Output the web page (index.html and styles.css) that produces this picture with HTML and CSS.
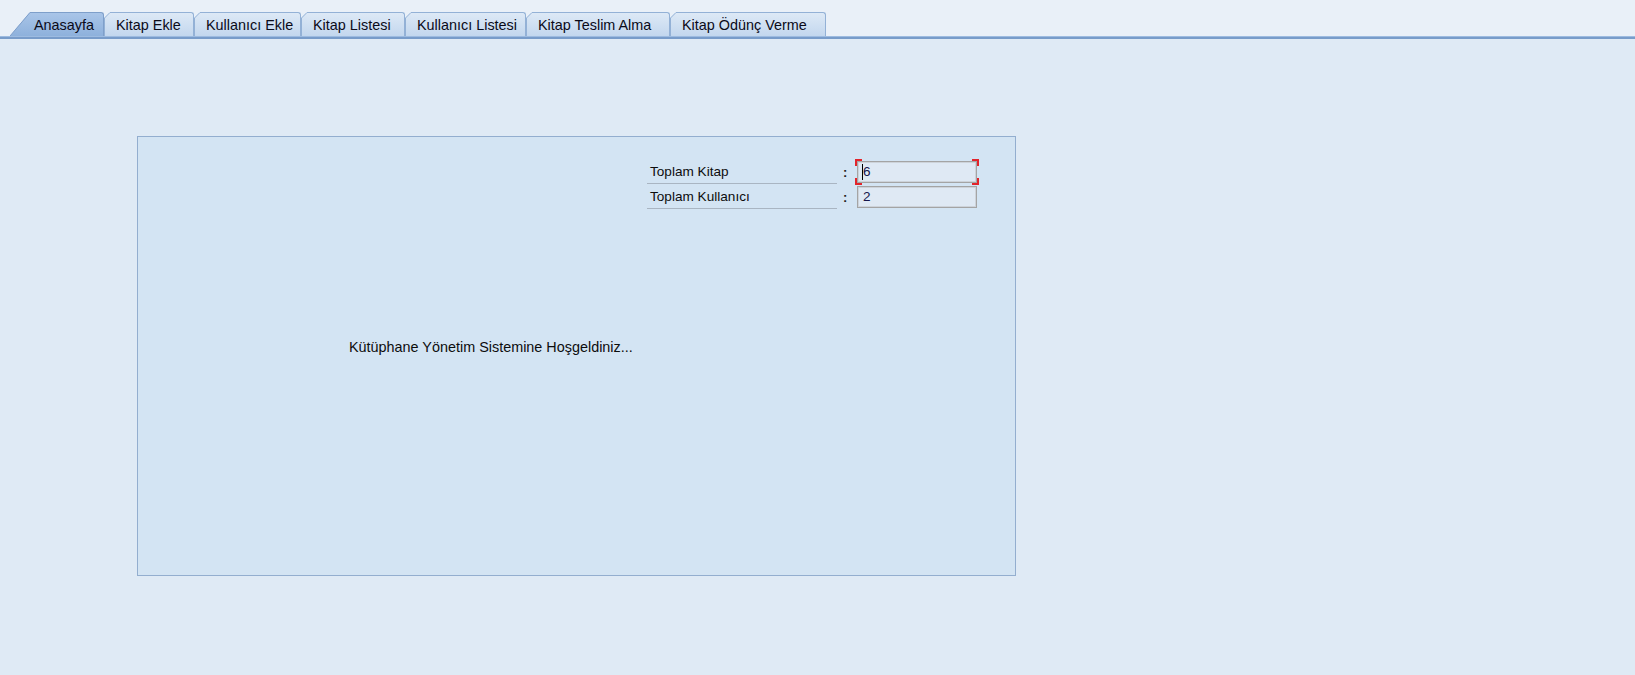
FILE: index.html
```html
<!DOCTYPE html>
<html lang="tr">
<head>
<meta charset="utf-8">
<title>Kütüphane Yönetim Sistemi</title>
<link rel="stylesheet" href="styles.css">
</head>
<body>
<svg class="defs" width="0" height="0" aria-hidden="true">
  <defs>
    <linearGradient id="gSel" x1="0" y1="0" x2="0" y2="1">
      <stop offset="0" stop-color="#a9c5e8"/>
      <stop offset="1" stop-color="#8eb1dc"/>
    </linearGradient>
    <linearGradient id="gTab" x1="0" y1="0" x2="0" y2="1">
      <stop offset="0" stop-color="#dde9f6"/>
      <stop offset="1" stop-color="#c3d7ee"/>
    </linearGradient>
  </defs>
</svg>
<div class="app">
  <div class="tabstrip">
    <div class="tab selected w-ana">
      <svg class="slant-long" width="20" height="24" viewBox="0 0 20 24"><polygon points="0,24 20,0 20,24" fill="url(#gSel)"/><polyline points="0,24 20,0.5" fill="none" stroke="#7e9fca" stroke-width="1"/></svg>
      <div class="tab-body">Anasayfa</div>
    </div>
    <div class="tab w-ekle">
      <svg class="slant" width="6" height="24" viewBox="0 0 6 24"><polygon points="0,24 0,6 6,0 6,24" fill="url(#gTab)"/><polyline points="0.5,24 0.5,6 6,0.5" fill="none" stroke="#93b1d6" stroke-width="1"/></svg>
      <div class="tab-body">Kitap Ekle</div>
    </div>
    <div class="tab w-kekle">
      <svg class="slant" width="6" height="24" viewBox="0 0 6 24"><polygon points="0,24 0,6 6,0 6,24" fill="url(#gTab)"/><polyline points="0.5,24 0.5,6 6,0.5" fill="none" stroke="#93b1d6" stroke-width="1"/></svg>
      <div class="tab-body">Kullanıcı Ekle</div>
    </div>
    <div class="tab w-klist">
      <svg class="slant" width="6" height="24" viewBox="0 0 6 24"><polygon points="0,24 0,6 6,0 6,24" fill="url(#gTab)"/><polyline points="0.5,24 0.5,6 6,0.5" fill="none" stroke="#93b1d6" stroke-width="1"/></svg>
      <div class="tab-body">Kitap Listesi</div>
    </div>
    <div class="tab w-ulist">
      <svg class="slant" width="6" height="24" viewBox="0 0 6 24"><polygon points="0,24 0,6 6,0 6,24" fill="url(#gTab)"/><polyline points="0.5,24 0.5,6 6,0.5" fill="none" stroke="#93b1d6" stroke-width="1"/></svg>
      <div class="tab-body">Kullanıcı Listesi</div>
    </div>
    <div class="tab w-teslim">
      <svg class="slant" width="6" height="24" viewBox="0 0 6 24"><polygon points="0,24 0,6 6,0 6,24" fill="url(#gTab)"/><polyline points="0.5,24 0.5,6 6,0.5" fill="none" stroke="#93b1d6" stroke-width="1"/></svg>
      <div class="tab-body">Kitap Teslim Alma</div>
    </div>
    <div class="tab w-odunc">
      <svg class="slant" width="6" height="24" viewBox="0 0 6 24"><polygon points="0,24 0,6 6,0 6,24" fill="url(#gTab)"/><polyline points="0.5,24 0.5,6 6,0.5" fill="none" stroke="#93b1d6" stroke-width="1"/></svg>
      <div class="tab-body">Kitap Ödünç Verme</div>
    </div>
  </div>
  <div class="tabline"></div>
  <div class="content">
    <div class="panel">
      <div class="stats">
        <div class="row">
          <div class="label">Toplam Kitap</div>
          <div class="colon">:</div>
          <div class="field focused">
            <span class="caret"></span>6
            <span class="corner tl"></span><span class="corner tr"></span><span class="corner bl"></span><span class="corner br"></span>
          </div>
        </div>
        <div class="row">
          <div class="label">Toplam Kullanıcı</div>
          <div class="colon">:</div>
          <div class="field">2</div>
        </div>
      </div>
      <div class="welcome">Kütüphane Yönetim Sistemine Hoşgeldiniz...</div>
    </div>
  </div>
</div>
</body>
</html>
```

FILE: styles.css
```css
* { box-sizing: border-box; }

html, body {
  margin: 0;
  padding: 0;
  height: 100%;
  overflow: hidden;
}

body {
  background: #dfeaf5;
  font-family: "Liberation Sans", Arial, sans-serif;
  font-size: 13px;
  color: #111;
}

.defs {
  position: absolute;
  width: 0;
  height: 0;
  overflow: hidden;
}

.app {
  display: flex;
  flex-direction: column;
  height: 100%;
}

.tabstrip {
  height: 36px;
  background: #e9f0f8;
  display: flex;
  align-items: flex-end;
  padding-left: 10px;
}

.tab {
  display: flex;
  height: 24px;
}

.tab svg {
  display: block;
  flex: none;
}

.tab-body {
  flex: 1;
  height: 24px;
  line-height: 24px;
  padding-left: 6px;
  white-space: nowrap;
  font-size: 14.4px;
  color: #0a0a18;
  border-top: 1px solid #93b1d6;
  border-right: 1px solid #93b1d6;
  border-top-right-radius: 3px;
  background: linear-gradient(#dde9f6, #c3d7ee);
}

.tab.selected .tab-body {
  padding-left: 4px;
  border-top-color: #7e9fca;
  border-right-color: #7e9fca;
  background: linear-gradient(#a9c5e8, #8eb1dc);
}

.w-ana { width: 94px; }
.w-ekle { width: 90px; }
.w-kekle { width: 107px; }
.w-klist { width: 104px; }
.w-ulist { width: 121px; }
.w-teslim { width: 144px; }
.w-odunc { width: 156px; }

.tabline {
  height: 3px;
  background: #789cca;
  border-top: 1px solid #9dbbe0;
}

.content {
  flex: 1;
  background: #dfeaf5;
  padding-top: 97px;
  padding-left: 137px;
}

.panel {
  width: 879px;
  height: 440px;
  background: #d3e4f3;
  border: 1px solid #93aecf;
}

.stats {
  margin-left: 509px;
  margin-top: 23px;
  display: flex;
  flex-direction: column;
  gap: 1px;
}

.row {
  display: flex;
  align-items: center;
  height: 24px;
}

.label {
  width: 190px;
  height: 24px;
  line-height: 23px;
  padding-left: 3px;
  font-size: 13.6px;
  border-bottom: 1px solid #a9b5c2;
  color: #0d0d0d;
}

.colon {
  width: 20px;
  padding-left: 6px;
  font-weight: bold;
  color: #222;
}

.field {
  position: relative;
  width: 120px;
  height: 22px;
  line-height: 20px;
  padding-left: 5px;
  font-size: 13.6px;
  background: #dfe9f4;
  border: 1px solid #a4a4a4;
  box-shadow: inset 0 0 0 1px #cdd3da;
  color: #15154a;
  display: flex;
  align-items: center;
}

.caret {
  display: inline-block;
  width: 1px;
  height: 16px;
  background: #000;
  margin-left: -1px;
}

.corner {
  position: absolute;
  width: 7px;
  height: 7px;
  border-color: #e2242b;
  border-style: solid;
  border-width: 0;
}

.corner.tl { top: -3px; left: -3px; border-top-width: 2px; border-left-width: 2px; }
.corner.tr { top: -3px; right: -3px; border-top-width: 2px; border-right-width: 2px; }
.corner.bl { bottom: -3px; left: -3px; border-bottom-width: 2px; border-left-width: 2px; }
.corner.br { bottom: -3px; right: -3px; border-bottom-width: 2px; border-right-width: 2px; }

.welcome {
  margin-top: 130px;
  padding-left: 211px;
  font-size: 14.4px;
  line-height: 16px;
  color: #0d0d0d;
}
```
